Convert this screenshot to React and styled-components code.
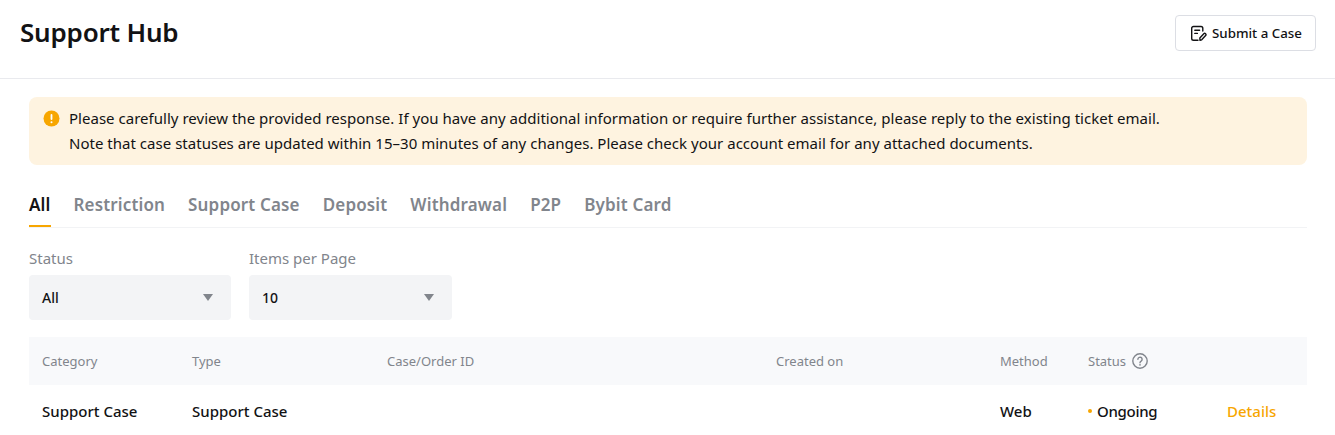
import React from 'react';
import styled, { createGlobalStyle } from 'styled-components';

const GlobalStyle = createGlobalStyle`
  html, body {
    margin: 0;
    padding: 0;
    height: 435px;
    overflow: hidden;
    background: #fff;
    font-family: 'Noto Sans', 'Liberation Sans', sans-serif;
    color: #121214;
  }
`;

const Header = styled.header`
  display: flex;
  align-items: center;
  justify-content: space-between;
  height: 79px;
  padding: 0 19px 12px 20px;
  box-sizing: border-box;
  border-bottom: 1px solid #e9eaee;
`;

const Title = styled.h1`
  margin: 0 0 2px;
  font-size: 26px;
  line-height: 34px;
  font-weight: 600;
  letter-spacing: -0.2px;
`;

const SubmitButton = styled.button`
  display: flex;
  align-items: center;
  gap: 5px;
  width: 141px;
  height: 36px;
  padding: 0 0 0 14px;
  background: #fff;
  border: 1px solid #dcdee4;
  border-radius: 4px;
  font: 500 13.3px 'Noto Sans', sans-serif;
  color: #121214;
`;

const Content = styled.main`
  padding: 18px 28px 0 29px;
`;

const Alert = styled.div`
  display: flex;
  gap: 9px;
  height: 68px;
  padding: 9px 14px;
  box-sizing: border-box;
  background: #fef3e0;
  border-radius: 8px;
  font-size: 15px;
  line-height: 25px;
  letter-spacing: 0.02px;
  color: #121214;
`;

const AlertIcon = styled.svg`
  flex: none;
  width: 17px;
  height: 17px;
  margin-top: 4px;
`;

const Tabs = styled.nav`
  display: flex;
  gap: 23px;
  height: 46px;
  margin-top: 17px;
  border-bottom: 1px solid #f2f3f5;
  box-sizing: border-box;
`;

const Tab = styled.span`
  height: 45px;
  box-sizing: border-box;
  padding-top: 11px;
  font-size: 17px;
  line-height: 24px;
  font-weight: 600;
  letter-spacing: 0.15px;
  color: ${({ $active }) => ($active ? '#121214' : '#81858c')};
  border-bottom: 2px solid ${({ $active }) => ($active ? '#f7a600' : 'transparent')};
`;

const Filters = styled.div`
  display: flex;
  gap: 18px;
  margin-top: 18px;
`;

const Filter = styled.div`
  width: ${({ $width }) => $width}px;
`;

const FilterLabel = styled.div`
  font-size: 15px;
  line-height: 24px;
  color: #81858c;
`;

const Select = styled.div`
  display: flex;
  align-items: center;
  justify-content: space-between;
  height: 45px;
  margin-top: 5px;
  padding: 0 18px 0 13px;
  background: #f3f4f6;
  border-radius: 4px;
  font-size: 14px;
  font-weight: 500;
  color: #121214;
`;

const Caret = styled.i`
  width: 0;
  height: 0;
  margin-bottom: 1px;
  border-left: 5px solid transparent;
  border-right: 5px solid transparent;
  border-top: 7px solid #81858c;
`;

const Row = styled.div`
  display: grid;
  grid-template-columns: 150px 195px 389px 224px 88px 139px 1fr;
  align-items: center;
  padding-left: 13px;
`;

const HeadRow = styled(Row)`
  height: 48px;
  margin-top: 17px;
  background: #f8f9fb;
  font-size: 13px;
  color: #81858c;
`;

const BodyRow = styled(Row)`
  height: 51px;
  font-size: 15px;
  font-weight: 500;
  color: #121214;
`;

const HeadStatus = styled.span`
  display: flex;
  align-items: center;
  gap: 6px;
`;

const Ongoing = styled.span`
  display: flex;
  align-items: center;
  gap: 5px;
  letter-spacing: -0.3px;

  &:before {
    content: '';
    width: 4px;
    height: 4px;
    border-radius: 50%;
    background: #f7a600;
  }
`;

const DetailsLink = styled.a`
  color: #f7a600;
`;

const tabs = ['All', 'Restriction', 'Support Case', 'Deposit', 'Withdrawal', 'P2P', 'Bybit Card'];

const App = () => (
  <>
    <GlobalStyle />
    <Header>
      <Title>Support Hub</Title>
      <SubmitButton>
        <svg width="17" height="17" viewBox="0 0 17 17" fill="none" stroke="#121214" strokeWidth="1.4" strokeLinecap="round" strokeLinejoin="round">
          <path d="M8 15.2H3.5A1.8 1.8 0 0 1 1.7 13.4V3.3A1.8 1.8 0 0 1 3.5 1.5H11A1.8 1.8 0 0 1 12.8 3.3V6" />
          <path d="M4.8 5.2H9.6M4.8 8.4H7.4" />
          <path d="M10 15.3l-.2-2.3 4-4.2a1.2 1.2 0 0 1 1.8 1.7l-3.9 4.3z" />
        </svg>
        Submit a Case
      </SubmitButton>
    </Header>
    <Content>
      <Alert>
        <AlertIcon viewBox="0 0 17 17">
          <circle cx="8.5" cy="8.5" r="8" fill="#f7a600" />
          <rect x="7.6" y="4" width="1.8" height="6" rx=".9" fill="#fff" />
          <circle cx="8.5" cy="12.2" r="1" fill="#fff" />
        </AlertIcon>
        <div>
          Please carefully review the provided response. If you have any additional information or require further assistance, please reply to the existing ticket email.
          <br />
          Note that case statuses are updated within 15–30 minutes of any changes. Please check your account email for any attached documents.
        </div>
      </Alert>
      <Tabs>
        {tabs.map((tab, i) => (
          <Tab key={tab} $active={i === 0}>{tab}</Tab>
        ))}
      </Tabs>
      <Filters>
        <Filter $width={202}>
          <FilterLabel>Status</FilterLabel>
          <Select>All<Caret /></Select>
        </Filter>
        <Filter $width={203}>
          <FilterLabel>Items per Page</FilterLabel>
          <Select>10<Caret /></Select>
        </Filter>
      </Filters>
      <HeadRow>
        <span>Category</span>
        <span>Type</span>
        <span>Case/Order ID</span>
        <span>Created on</span>
        <span>Method</span>
        <HeadStatus>
          Status
          <svg width="16" height="16" viewBox="0 0 16 16" fill="none" stroke="#81858c" strokeWidth="1.4" strokeLinecap="round">
            <circle cx="8" cy="8" r="7.2" />
            <path d="M5.9 6.3a2.1 2.1 0 1 1 3.2 1.8c-.7.4-1.1.8-1.1 1.6" />
            <path d="M8 11.8v.1" strokeWidth="1.6" />
          </svg>
        </HeadStatus>
        <span />
      </HeadRow>
      <BodyRow>
        <span>Support Case</span>
        <span>Support Case</span>
        <span />
        <span />
        <span>Web</span>
        <Ongoing>Ongoing</Ongoing>
        <DetailsLink>Details</DetailsLink>
      </BodyRow>
    </Content>
  </>
);

export default App;
